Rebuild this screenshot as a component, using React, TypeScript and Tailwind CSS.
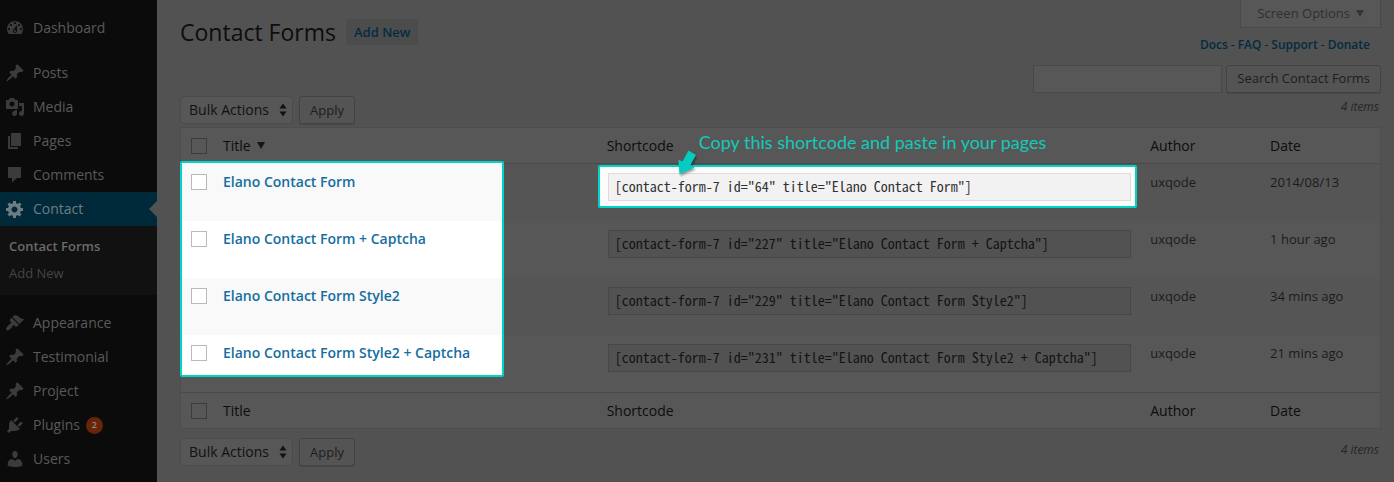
import type { ReactNode } from 'react';

const icons = {
  dashboard:
    'M3.76 16h12.48c1.1-1.37 1.76-3.11 1.76-5 0-4.42-3.58-8-8-8s-8 3.58-8 8c0 1.89.66 3.63 1.76 5zM10 4c.55 0 1 .45 1 1s-.45 1-1 1-1-.45-1-1 .45-1 1-1zM6 6c.55 0 1 .45 1 1s-.45 1-1 1-1-.45-1-1 .45-1 1-1zm8 0c.55 0 1 .45 1 1s-.45 1-1 1-1-.45-1-1 .45-1 1-1zm-5.37 5.55L12 7v6c0 1.1-.9 2-2 2s-2-.9-2-2c0-.57.24-1.08.63-1.45zM4 10c.55 0 1 .45 1 1s-.45 1-1 1-1-.45-1-1 .45-1 1-1zm12 0c.55 0 1 .45 1 1s-.45 1-1 1-1-.45-1-1 .45-1 1-1zm-5 3c0-.55-.45-1-1-1s-1 .45-1 1 .45 1 1 1 1-.45 1-1z',
  pin: 'M10.44 3.02l1.82-1.82 6.36 6.35-1.83 1.82c-1.05-.68-2.48-.57-3.41.36l-.75.75c-.92.93-1.04 2.35-.35 3.41l-1.83 1.82-2.41-2.41-2.8 2.79c-.42.42-3.38 2.71-3.8 2.29s1.86-3.39 2.28-3.81l2.79-2.79L4.1 9.36l1.83-1.82c1.05.69 2.48.57 3.4-.36l.75-.75c.93-.92 1.05-2.35.36-3.41z',
  media:
    'M13 11V4c0-.55-.45-1-1-1h-1.67L9 1H5L3.67 3H2c-.55 0-1 .45-1 1v7c0 .55.45 1 1 1h10c.55 0 1-.45 1-1zM7 4.5c1.38 0 2.5 1.12 2.5 2.5S8.38 9.5 7 9.5 4.5 8.38 4.5 7 5.62 4.5 7 4.5zM14 6h5v10.5c0 1.38-1.12 2.5-2.5 2.5S14 17.88 14 16.5s1.12-2.5 2.5-2.5c.17 0 .34.02.5.05V9h-3V6zm-4 8.05V13h2v3.5c0 1.38-1.12 2.5-2.5 2.5S7 17.88 7 16.5 8.12 14 9.5 14c.17 0 .34.02.5.05z',
  pages: 'M6 15V2h10v13H6zm-1 1h8v2H3V5h2v11z',
  comments:
    'M4 2h11c.55 0 1 .45 1 1v9c0 .55-.45 1-1 1h-3l-5 4.500v-4.500H4c-.55 0-1-.45-1-1V3c0-.55.45-1 1-1z',
  gear: 'M18 12h-2.18c-.17.7-.44 1.35-.81 1.93l1.54 1.54-2.1 2.1-1.54-1.54c-.58.36-1.23.63-1.91.79V19H8v-2.18c-.68-.16-1.33-.43-1.91-.79l-1.54 1.54-2.12-2.12 1.54-1.54c-.36-.58-.63-1.23-.79-1.91H1V9.03h2.17c.16-.7.44-1.35.8-1.94L2.43 5.55l2.1-2.1 1.54 1.54c.58-.37 1.24-.64 1.93-.81V2h3v2.18c.68.16 1.33.43 1.91.79l1.54-1.54 2.12 2.12-1.54 1.54c.36.59.64 1.24.8 1.94H18V12zm-8.5 1.5c1.66 0 3-1.34 3-3s-1.34-3-3-3-3 1.34-3 3 1.34 3 3 3z',
  brush:
    'M14.48 11.06L7.41 3.99l1.5-1.5c.5-.56 2.3-.47 3.51.32 1.21.8 1.43 1.28 2.91 2.1 1.18.64 2.45 1.26 4.45.85zm-.71.71L6.7 4.7 4.93 6.47c-.39.39-.39 1.02 0 1.41l1.06 1.06c.39.39.39 1.03 0 1.42-.6.6-1.43 1.11-2.21 1.69-.35.26-.7.53-1.01.84C1.43 14.23.4 16.08 1.4 17.07c.99 1 2.84-.03 4.18-1.36.31-.31.58-.66.85-1.02.57-.78 1.08-1.61 1.69-2.21.39-.39 1.02-.39 1.41 0l1.06 1.06c.39.39 1.02.39 1.41 0z',
  plug: 'M13.11 4.36L9.87 7.6 8 5.73l3.24-3.24c.35-.34 1.05-.2 1.56.32.52.51.66 1.21.31 1.55zm-8 1.77l.91-1.12 9.01 9.01-1.19.84c-.71.71-2.63 1.16-3.82 1.16H6.14L4.9 17.26c-.59.59-1.54.59-2.12 0-.59-.58-.59-1.53 0-2.12l1.24-1.24v-3.88c0-1.13.4-3.19 1.09-3.89zm7.26 3.97l3.24-3.24c.34-.35 1.04-.21 1.55.31.52.51.66 1.21.31 1.55l-3.24 3.25z',
  user: 'M10 9.25c-2.27 0-2.73-3.44-2.73-3.44C7 4.02 7.82 2 9.97 2c2.16 0 2.98 2.02 2.71 3.81 0 0-.41 3.44-2.68 3.44zm0 2.57L12.72 10c2.39 0 4.52 2.33 4.52 4.53v2.49s-3.65 1.13-7.24 1.13c-3.65 0-7.24-1.13-7.24-1.13v-2.49c0-2.25 1.94-4.48 4.47-4.48z',
};

type IconName = keyof typeof icons;

function MenuItem({ icon, label, badge, current }: { icon: IconName; label: string; badge?: number; current?: boolean }) {
  return (
    <li className={current ? 'relative bg-[#00293a] text-[#6f7d83]' : 'text-[#5a5a5a]'}>
      <a href="#" className="flex h-[34px] items-center pl-[5px] text-sm">
        <svg viewBox="0 0 20 20" className={current ? 'size-5 fill-[#6f7d83]' : 'size-5 fill-[#3b3b3b]'} aria-hidden="true">
          <path d={icons[icon]} />
        </svg>
        <span className="pl-2">{label}</span>
        {badge && (
          <span className="ml-1.5 flex size-[17px] items-center justify-center rounded-full bg-[#6a2409] text-[9px] font-semibold text-[#8a8a8a]">
            {badge}
          </span>
        )}
      </a>
      {current && (
        <span className="absolute top-[9px] right-0 border-y-8 border-r-8 border-y-transparent border-r-[#525252]" />
      )}
    </li>
  );
}

function Sidebar() {
  return (
    <nav className="w-[157px] shrink-0 bg-[#0b0b0b] pt-[11px]" aria-label="Admin menu">
      <ul>
        <MenuItem icon="dashboard" label="Dashboard" />
      </ul>
      <ul className="pt-[11px]">
        <MenuItem icon="pin" label="Posts" />
        <MenuItem icon="media" label="Media" />
        <MenuItem icon="pages" label="Pages" />
        <MenuItem icon="comments" label="Comments" />
        <MenuItem icon="gear" label="Contact" current />
      </ul>
      <ul className="bg-[#111] pt-[7px] pb-2 pl-[9px] text-[13px] leading-[27px]">
        <li>
          <a href="#" className="font-semibold text-[#6a6a6a]">Contact Forms</a>
        </li>
        <li>
          <a href="#" className="text-[#454545]">Add New</a>
        </li>
      </ul>
      <ul className="pt-[11px]">
        <MenuItem icon="brush" label="Appearance" />
        <MenuItem icon="pin" label="Testimonial" />
        <MenuItem icon="pin" label="Project" />
        <MenuItem icon="plug" label="Plugins" badge={2} />
        <MenuItem icon="user" label="Users" />
      </ul>
    </nav>
  );
}

function BulkActions({ label }: { label: string }) {
  return (
    <div className="flex gap-1.5 text-sm">
      <div className="relative">
        <select
          aria-label={label}
          className="h-7 w-[113px] appearance-none rounded border border-[#4b4b4b] bg-[#575757] pl-2 text-[#111]"
        >
          <option>Bulk Actions</option>
        </select>
        <svg viewBox="0 0 8 14" className="pointer-events-none absolute top-[7px] right-1.5 h-3.5 w-2 fill-[#111]" aria-hidden="true">
          <path d="M4 0.500L7.500 5.500H.5zM4 13.500L.5 8.500h7z" />
        </svg>
      </div>
      <Button>Apply</Button>
    </div>
  );
}

function Button({ children }: { children: ReactNode }) {
  return (
    <button className="h-7 rounded-[3px] border border-[#434343] bg-[#545454] px-2.5 text-[13px] text-[#1d1d1d] shadow-[0_1px_0_#484848]">
      {children}
    </button>
  );
}

const tick = 'block size-4 appearance-none border';

const rows = [
  { title: 'Elano Contact Form', code: '[contact-form-7 id="64" title="Elano Contact Form"]', date: '2014/08/13' },
  { title: 'Elano Contact Form + Captcha', code: '[contact-form-7 id="227" title="Elano Contact Form + Captcha"]', date: '1 hour ago' },
  { title: 'Elano Contact Form Style2', code: '[contact-form-7 id="229" title="Elano Contact Form Style2"]', date: '34 mins ago' },
  { title: 'Elano Contact Form Style2 + Captcha', code: '[contact-form-7 id="231" title="Elano Contact Form Style2 + Captcha"]', date: '21 mins ago' },
];

function Callout() {
  return (
    <>
      <span className="pointer-events-none absolute top-0.5 left-[102px] z-20 text-lg leading-6 whitespace-nowrap text-[#13c9b9] font-['Lato',sans-serif]">
        Copy this shortcode and paste in your pages
      </span>
      <svg viewBox="0 0 22 28" className="pointer-events-none absolute top-[21px] left-20 z-20 h-7 w-[22px] drop-shadow-[1px_2px_1px_rgba(0,0,0,0.4)]" aria-hidden="true">
        <path d="M11.500 1.500L19 6l-5.500 10 4 2.500L2.500 25 1.300 10.500l4.200 2z" fill="#05cbc0" />
      </svg>
    </>
  );
}

function HeadingCells({ top }: { top?: boolean }) {
  const line = top ? 'border-b border-[#4a4a4a]' : 'border-t border-[#4a4a4a]';
  const cell = `${line} h-9 px-2.5 text-left align-middle font-normal text-[#0d0d0d]`;
  return (
    <>
      <td className={`${line} w-8 pl-2.5 align-middle`}>
        <input type="checkbox" aria-label={top ? 'Select all' : 'Select all, bottom'} className={`${tick} border-[#3c3c3c] bg-[#575757]`} />
      </td>
      <th scope="col" className={`${cell} w-[32%]`}>
        <span className="flex items-center gap-1.5">
          Title
          {top && (
            <svg viewBox="0 0 8 7" className="h-[7px] w-2 fill-[#151515]" aria-hidden="true">
              <path d="M0 0h8L4 7z" />
            </svg>
          )}
        </span>
      </th>
      <th scope="col" className={`${cell} relative`}>
        Shortcode
        {top && <Callout />}
      </th>
      <th scope="col" className={`${cell} w-[10%]`}>Author</th>
      <th scope="col" className={`${cell} w-[10%]`}>Date</th>
    </>
  );
}

function FormsTable() {
  return (
    <div className="relative mt-[3px] border border-[#4d4d4d] bg-[#575757]">
      <div className="absolute top-[33px] -left-px h-[216px] w-[324px] overflow-hidden rounded-xs border-2 border-[#00d3c8] bg-white">
        <div className="h-[58px] bg-[#f9f9f9]" />
        <div className="h-[57px] bg-white" />
        <div className="h-[57px] bg-[#f9f9f9]" />
      </div>
      <table className="w-full table-fixed border-separate border-spacing-0 text-sm leading-5">
        <thead>
          <tr>
            <HeadingCells top />
          </tr>
        </thead>
        <tbody>
          {rows.map((row, i) => (
            <tr key={row.code} className={`h-[57px] align-top text-[#1b1b1b] ${i % 2 ? '' : 'bg-[#555]'}`}>
              <td className="pt-2.5 pl-2.5">
                <input type="checkbox" aria-label={`Select ${row.title}`} className={`${tick} relative border-[#b9b9b9] bg-white`} />
              </td>
              <td className="px-2.5 pt-2">
                <a href="#" className="relative font-semibold text-[#146e9f]">{row.title}</a>
              </td>
              <td className="pt-[9px] pr-[9px] pl-[11px]">
                <div className="relative">
                  {i === 0 && (
                    <div className="absolute -top-2 -right-1.5 -bottom-[7px] -left-2.5 rounded-xs border-2 border-[#00d3c8] bg-[#fcfcfc]" />
                  )}
                  <input
                    readOnly
                    aria-label={`Shortcode for ${row.title}`}
                    value={row.code}
                    className={`relative block h-7 w-full border px-1.5 pb-0.5 text-sm font-['Noto_Sans_Mono_CJK_SC','Liberation_Mono',monospace] ${
                      i === 0 ? 'border-[#ddd] bg-[#f2f2f2] text-[#333]' : 'border-[#474747] bg-[#525252] text-[#141414]'
                    }`}
                  />
                </div>
              </td>
              <td className="px-2.5 pt-2 text-[13px]">uxqode</td>
              <td className="px-2.5 pt-2 text-[13px]">{row.date}</td>
            </tr>
          ))}
        </tbody>
        <tfoot>
          <tr>
            <HeadingCells />
          </tr>
        </tfoot>
      </table>
    </div>
  );
}

const link = 'font-semibold text-[#022c40]';

export default function App() {
  return (
    <div className="flex min-h-screen bg-[#525252] font-['Open_Sans',sans-serif]">
      <Sidebar />
      <main className="min-w-0 flex-1 pr-[13px] pl-[23px]">
        <div className="flex justify-between">
          <header className="flex flex-col justify-between">
            <div className="flex items-center gap-2.5 pt-4">
              <h1 className="text-[23px] leading-8 text-[#0d0d0d]">Contact Forms</h1>
              <a href="#" className="rounded-xs bg-[#4c4c4c] px-2 py-[3px] text-[13px] leading-5 font-semibold text-[#022c40]">
                Add New
              </a>
            </div>
            <BulkActions label="Bulk actions" />
          </header>
          <div className="flex flex-col items-end">
            <button className="flex h-7 items-center gap-1.5 border border-t-0 border-[#494949] bg-[#575757] px-4 text-[13px] text-[#303030]">
              Screen Options
              <svg viewBox="0 0 8 7" className="h-[7px] w-2 fill-[#353535]" aria-hidden="true">
                <path d="M0 0h8L4 7z" />
              </svg>
            </button>
            <p className="flex gap-[3px] pt-[7px] pr-[11px] text-xs leading-5 text-[#181818]">
              <a href="#" className={link}>Docs</a>
              <span>-</span>
              <a href="#" className={link}>FAQ</a>
              <span>-</span>
              <a href="#" className={link}>Support</a>
              <span>-</span>
              <a href="#" className={link}>Donate</a>
            </p>
            <form className="flex gap-1 pt-2.5" onSubmit={(e) => e.preventDefault()}>
              <input type="text" aria-label="Search contact forms" className="h-7 w-[189px] border border-[#494949] bg-[#575757] px-2 text-sm" />
              <Button>Search Contact Forms</Button>
            </form>
            <p className="pt-1 pr-0.5 pb-[7px] text-xs leading-5 text-[#262626] italic">4 items</p>
          </div>
        </div>
        <FormsTable />
        <div className="flex justify-between pt-[9px]">
          <BulkActions label="Bulk actions, bottom" />
          <p className="pr-0.5 text-xs leading-6 text-[#262626] italic">4 items</p>
        </div>
      </main>
    </div>
  );
}
